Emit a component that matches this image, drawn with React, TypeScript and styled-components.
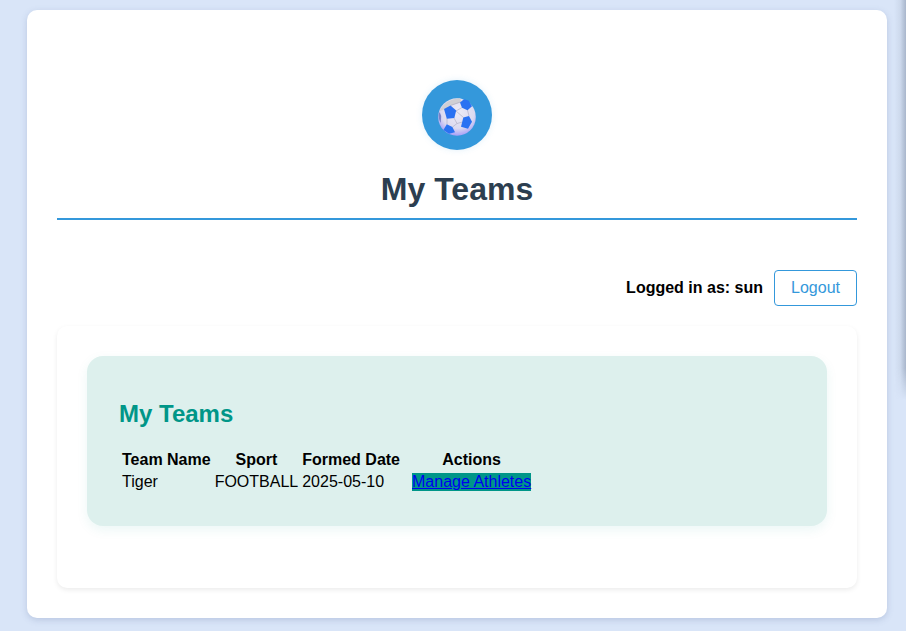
import * as React from 'react'

import styled, { createGlobalStyle } from 'styled-components'

const GlobalStyle = createGlobalStyle`
  html, body {
    margin: 0;
    padding: 0;
  }
  body {
    height: 631px;
    overflow: hidden;
    background: #d9e5f8;
    font-family: 'Liberation Sans', Arial, sans-serif;
  }
`

const SoccerBall = () => (
  <svg width='40' height='40' viewBox='0 -2 40 40' overflow='visible'>
    <defs>
      <radialGradient id='ball' cx='52%' cy='36%' r='68%'>
        <stop offset='0%' stopColor='#ecebf6' />
        <stop offset='65%' stopColor='#dcdaf0' />
        <stop offset='100%' stopColor='#9a92fa' />
      </radialGradient>
    </defs>
    <circle cx='20' cy='20' r='18.8' fill='url(#ball)' />
    <path d='M2.6 14 C6 6.5 12 2 23 1.2 L25 5 L14 8.5 L7 12.5 Z' fill='#cfcfd4' />
    <g stroke='#a9a9c0' strokeWidth='0.6' fill='none'>
      <path d='M19 14 L25 10.5 M19 14 L26.5 20.5 M17 21 L20 26.5 L25.5 25 M20 26.5 L15.5 30 M10 21.5 L10 27.5 M13.5 8.5 L23.5 5 M30.5 13 L32 19' />
    </g>
    <g fill='#2a72f2'>
      <path d='M7 12 L13.5 8.5 L19.2 13.5 L17.3 21 L9.8 21.8 Z' />
      <path d='M23 5.5 L27 2.2 L31.5 3.6 L35 9.3 L30.5 13.2 L25 10.8 Z' />
      <path d='M26.3 20.5 L32 19 L35 24.7 L31 31.8 L24 29.7 Z' />
      <path d='M9.8 27.3 L15.4 30 L18 35.2 L12 36.8 L6.4 32.9 Z' />
    </g>
    <path d='M2.6 15 L4.2 19 L3.8 26 C1.8 23 0.9 18 2.6 15 Z' fill='#7a82c8' />
  </svg>
)

export default function App() {
  return (
    <>
      <GlobalStyle />
      <Container>
        <Header>
          <Logo>
            <SoccerBall />
          </Logo>
          <PageTitle>My Teams</PageTitle>
        </Header>
        <UserBar>
          <UserName>Logged in as: sun</UserName>
          <LogoutButton>Logout</LogoutButton>
        </UserBar>
        <Card>
          <Panel>
            <PanelTitle>My Teams</PanelTitle>
            <Table>
              <thead>
                <tr>
                  <th>Team Name</th>
                  <th>Sport</th>
                  <th>Formed Date</th>
                  <th>Actions</th>
                </tr>
              </thead>
              <tbody>
                <tr>
                  <td>Tiger</td>
                  <td>FOOTBALL</td>
                  <td>2025-05-10</td>
                  <td>
                    <ActionLink href='#'>Manage Athletes</ActionLink>
                  </td>
                </tr>
              </tbody>
            </Table>
          </Panel>
        </Card>
      </Container>
      <EdgeShade />
    </>
  )
}

const Container = styled.div`
  box-sizing: border-box;
  width: 860px;
  height: 608px;
  margin: 10px 0 0 27px;
  padding: 30px;
  background: #fff;
  border-radius: 10px;
  box-shadow: 0 2px 6px rgba(90, 110, 160, 0.25);
`
const Header = styled.header`
  display: flex;
  flex-direction: column;
  align-items: center;
  padding: 40px 0 10px;
  border-bottom: 2px solid #3498db;
`
const Logo = styled.div`
  display: flex;
  align-items: center;
  justify-content: center;
  width: 70px;
  height: 70px;
  border-radius: 50%;
  background: #3498db;
  box-shadow: 0 0 6px rgba(52, 152, 219, 0.15);
`
const PageTitle = styled.h1`
  margin: 21px 0 0;
  font-size: 32px;
  line-height: 37px;
  font-weight: 700;
  color: #2c3e50;
`
const UserBar = styled.div`
  display: flex;
  align-items: center;
  justify-content: flex-end;
  gap: 11px;
  margin-top: 50px;
`
const UserName = styled.span`
  font-size: 16px;
  font-weight: 700;
  color: #000;
`
const LogoutButton = styled.button`
  box-sizing: border-box;
  width: 83px;
  height: 36px;
  padding: 0;
  font-family: inherit;
  font-size: 16px;
  color: #3498db;
  background: #fff;
  border: 1px solid #3498db;
  border-radius: 4px;
`
const Card = styled.section`
  margin-top: 20px;
  padding: 30px;
  height: 262px;
  box-sizing: border-box;
  background: #fff;
  border-radius: 10px;
  box-shadow: 0 2px 5px rgba(0, 0, 0, 0.08);
`
const Panel = styled.div`
  box-sizing: border-box;
  height: 170px;
  padding: 44px 32px 0;
  background: #ddf0ed;
  border-radius: 16px;
  box-shadow: 0 4px 12px rgba(0, 150, 136, 0.08);
`
const PanelTitle = styled.h2`
  margin: 0 0 20px;
  font-size: 24px;
  line-height: 28px;
  font-weight: 700;
  color: #009688;
`
const Table = styled.table`
  font-size: 16px;
  color: #000;

  th {
    font-weight: 700;
    padding: 1px;
  }
  td {
    padding: 1px;
  }
`
const ActionLink = styled.a`
  display: inline-block;
  margin: 0 8px;
  color: #0000ee;
  background: #009688;
`
const EdgeShade = styled.div`
  position: fixed;
  top: 0;
  right: 0;
  width: 12px;
  height: 400px;
  background: linear-gradient(
    to right,
    rgba(110, 125, 150, 0),
    rgba(110, 125, 150, 0.1) 50%,
    rgba(110, 125, 150, 0.45)
  );
  mask-image: linear-gradient(to bottom, #000 92%, transparent);
`
